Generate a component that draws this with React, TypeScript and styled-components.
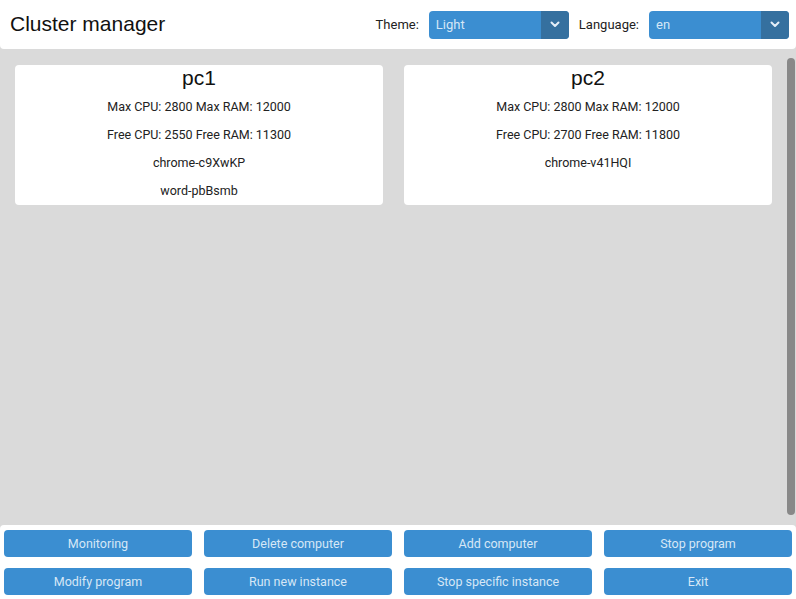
import React from "react";
import styled, { createGlobalStyle } from "styled-components";

const GlobalStyle = createGlobalStyle`
  html, body { margin: 0; padding: 0; height: 100%; }
  body {
    background: #dadada;
    font-family: Roboto, "Liberation Sans", Arial, sans-serif;
    overflow: hidden;
  }
  #root { height: 100%; }
`;

const Page = styled.div`
  display: flex;
  flex-direction: column;
  height: 599px;
`;

const Header = styled.header`
  flex: 0 0 49px;
  background: #ffffff;
  border-radius: 0 0 4px 4px;
  display: flex;
  align-items: center;
  padding: 0 7px 0 10px;
  box-sizing: border-box;
`;

const Title = styled.h1`
  margin: 0;
  flex: 1;
  font-family: "Liberation Sans", Arial, sans-serif;
  font-weight: normal;
  font-size: 21px;
  color: #111;
  padding-bottom: 1px;
`;

const Label = styled.span`
  font-size: 13px;
  color: #222;
  margin-right: 10px;
`;

const SelectBox = styled.div`
  width: 140px;
  height: 28px;
  border-radius: 4px;
  overflow: hidden;
  background: #3b8ed1;
  display: flex;
  margin-right: 10px;
  &:last-child { margin-right: 0; }
`;

const NativeSelect = styled.select`
  appearance: none;
  -webkit-appearance: none;
  border: none;
  outline: none;
  background: transparent;
  flex: 1;
  min-width: 0;
  padding: 0 0 0 7px;
  font-family: Roboto, "Liberation Sans", Arial, sans-serif;
  font-size: 13px;
  color: #d6e7f6;
  height: 28px;
`;

const Arrow = styled.span`
  flex: 0 0 28px;
  background: #35709f;
  display: flex;
  align-items: center;
  justify-content: center;
  pointer-events: none;
`;

const Main = styled.main`
  flex: 1;
  min-height: 0;
  overflow: hidden;
  display: flex;
`;

const CardGrid = styled.div`
  flex: 1;
  box-sizing: border-box;
  padding: 16px 14px 0 15px;
  display: grid;
  grid-template-columns: 1fr 1fr;
  column-gap: 21px;
  align-content: start;
`;

const ScrollTrack = styled.div`
  flex: 0 0 10px;
  box-sizing: border-box;
  padding: 9px 1px 10px;
  display: flex;
`;

const ScrollThumb = styled.div`
  flex: 1;
  background: #888888;
  border-radius: 4px;
`;

const Card = styled.section`
  background: #ffffff;
  border-radius: 4px;
  height: 140px;
  box-sizing: border-box;
  display: flex;
  flex-direction: column;
  align-items: center;
`;

const CardTitle = styled.h2`
  margin: 0;
  font-family: "Liberation Sans", Arial, sans-serif;
  font-weight: normal;
  font-size: 21px;
  line-height: 26px;
  color: #111;
  margin-bottom: 8px;
`;

const CardLine = styled.p`
  margin: 0 0 13px;
  font-size: 12.5px;
  line-height: 15px;
  color: #222;
`;

const Footer = styled.footer`
  flex: 0 0 74px;
  background: #ffffff;
  border-radius: 4px 4px 0 0;
  box-sizing: border-box;
  padding: 5px 4px 0 4px;
  display: grid;
  grid-template-columns: repeat(4, 1fr);
  grid-template-rows: 27px 27px;
  column-gap: 12px;
  row-gap: 11px;
`;

const ActionButton = styled.button`
  border: none;
  border-radius: 4px;
  background: #3b8ed1;
  color: #d6e7f6;
  font-family: Roboto, "Liberation Sans", Arial, sans-serif;
  font-size: 12.5px;
  padding: 0;
  cursor: pointer;
`;

const Chevron = () => (
  <svg width="10" height="7" viewBox="0 0 10 7">
    <polyline points="1.5,1.5 5,5 8.5,1.5" fill="none" stroke="#e3eef8" strokeWidth="2" strokeLinecap="round" strokeLinejoin="round" />
  </svg>
);

const Select = ({ value, options }: { value: string; options: string[] }) => (
  <SelectBox>
    <NativeSelect defaultValue={value}>
      {options.map((o) => (
        <option key={o} value={o}>{o}</option>
      ))}
    </NativeSelect>
    <Arrow><Chevron /></Arrow>
  </SelectBox>
);

const computers = [
  {
    name: "pc1",
    maxCpu: 2800, maxRam: 12000, freeCpu: 2550, freeRam: 11300,
    programs: ["chrome-c9XwKP", "word-pbBsmb"],
  },
  {
    name: "pc2",
    maxCpu: 2800, maxRam: 12000, freeCpu: 2700, freeRam: 11800,
    programs: ["chrome-v41HQI"],
  },
];

const actions = [
  "Monitoring", "Delete computer", "Add computer", "Stop program",
  "Modify program", "Run new instance", "Stop specific instance", "Exit",
];

export default function App() {
  return (
    <>
      <GlobalStyle />
      <Page>
        <Header>
          <Title>Cluster manager</Title>
          <Label>Theme:</Label>
          <Select value="Light" options={["Light", "Dark"]} />
          <Label>Language:</Label>
          <Select value="en" options={["en", "hu"]} />
        </Header>
        <Main>
          <CardGrid>
            {computers.map((c) => (
              <Card key={c.name}>
                <CardTitle>{c.name}</CardTitle>
                <CardLine>Max CPU: {c.maxCpu} Max RAM: {c.maxRam}</CardLine>
                <CardLine>Free CPU: {c.freeCpu} Free RAM: {c.freeRam}</CardLine>
                {c.programs.map((p) => (
                  <CardLine key={p}>{p}</CardLine>
                ))}
              </Card>
            ))}
          </CardGrid>
          <ScrollTrack aria-hidden="true">
            <ScrollThumb />
          </ScrollTrack>
        </Main>
        <Footer>
          {actions.map((a) => (
            <ActionButton key={a}>{a}</ActionButton>
          ))}
        </Footer>
      </Page>
    </>
  );
}
